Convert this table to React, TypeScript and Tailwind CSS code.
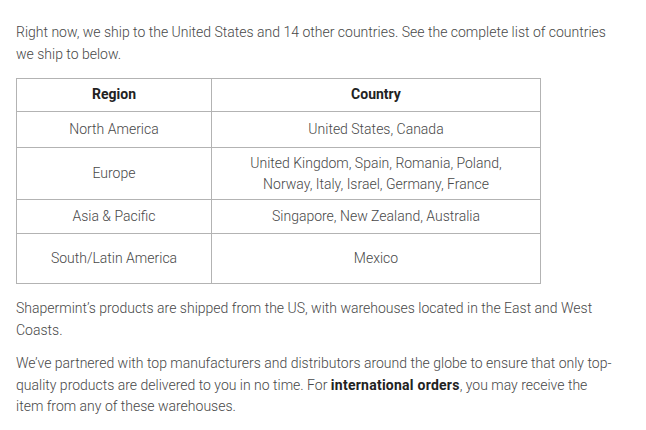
const rows = [
  { region: 'North America', country: 'United States, Canada', h: 'h-[36px]' },
  { region: 'Europe', country: 'United Kingdom, Spain, Romania, Poland, Norway, Italy, Israel, Germany, France', h: 'h-[52px]' },
  { region: 'Asia & Pacific', country: 'Singapore, New Zealand, Australia', h: 'h-[34px]' },
  { region: 'South/Latin America', country: 'Mexico', h: 'h-[50px]' },
]

export default function App() {
  return (
    <div className="min-h-screen bg-white px-4 pt-[22px] text-[14px] leading-[21.5px] text-[#484848] font-light" style={{ fontFamily: 'Roboto, sans-serif' }}>
      <p className="w-[598px]">
        Right now, we ship to the United States and 14 other countries. See the complete list of countries we ship to below.
      </p>
      <table className="mt-[13px] w-[525px] border-collapse border border-[#b3b3b3] text-center">
        <thead>
          <tr className="h-[33px]">
            <th className="w-[195px] border border-[#b3b3b3] font-bold text-[#222]">Region</th>
            <th className="border border-[#b3b3b3] font-bold text-[#222]">Country</th>
          </tr>
        </thead>
        <tbody>
          {rows.map(r => (
            <tr key={r.region} className={r.h}>
              <td className="border border-[#b3b3b3] px-2">{r.region}</td>
              <td className="border border-[#b3b3b3] px-9 leading-[21px]">{r.country}</td>
            </tr>
          ))}
        </tbody>
      </table>
      <p className="mt-[14px] w-[598px]">
        Shapermint’s products are shipped from the US, with warehouses located in the East and West Coasts.
      </p>
      <p className="mt-[12px] w-[598px]">
        We’ve partnered with top manufacturers and distributors around the globe to ensure that only top-quality products are delivered to you in no time. For <strong className="font-bold tracking-[0.25px] text-[#222]">international orders</strong>, you may receive the item from any of these warehouses.
      </p>
    </div>
  )
}
